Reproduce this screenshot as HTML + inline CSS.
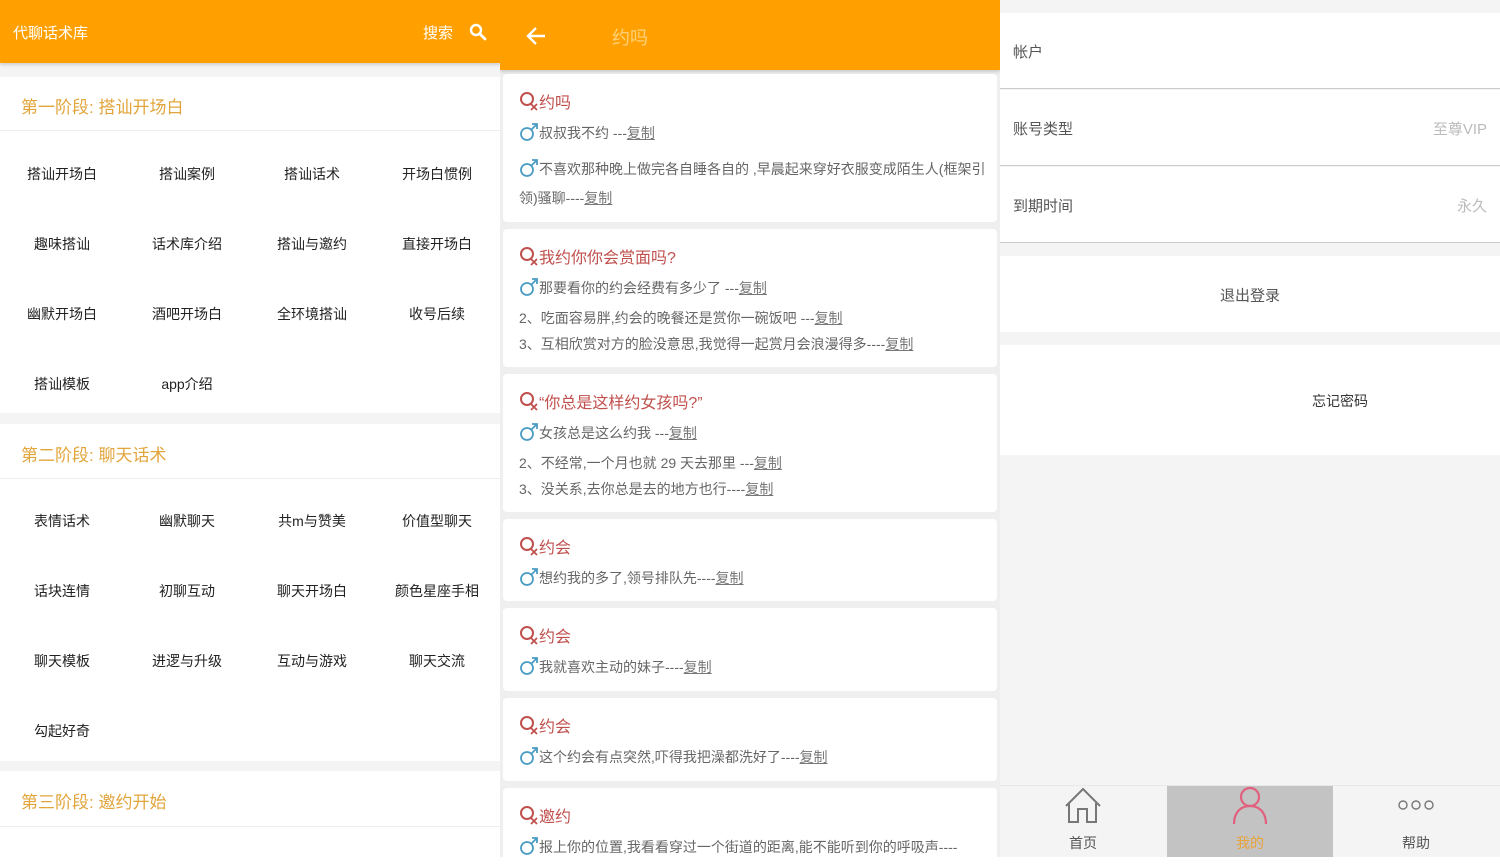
<!DOCTYPE html>
<html><head><meta charset="utf-8"><style>
*{margin:0;padding:0;box-sizing:border-box}
body{width:1500px;height:857px;overflow:hidden;position:relative;font-family:"Liberation Sans","Noto Sans CJK SC",sans-serif;background:#fff}
.p{position:absolute;top:0;height:857px;overflow:hidden}
.abs{position:absolute}
.t{position:absolute;transform:translate(-50%,-50%);white-space:nowrap}
.card{position:absolute;left:503px;width:494px;background:#fff;border-radius:4px}
.ln{position:absolute;left:16px;font-size:14px;color:#666;white-space:nowrap}
.ln u{color:#777;text-decoration:underline}
.ttl{position:absolute;left:16px;font-size:16px;color:#c0504d;white-space:nowrap}
.m{display:inline-block;width:20px;height:18px;vertical-align:-3px}
.q{display:inline-block;width:20px;height:20px;vertical-align:-3px}
</style></head><body>
<svg width="0" height="0" style="position:absolute"><defs>
<symbol id="male" viewBox="0 0 20 18"><circle cx="8" cy="11" r="6" stroke="#4a9cc4" stroke-width="1.8" fill="none"/><path d="M12.5 6.5 L18 1 M13 1 H18 V6" stroke="#4a9cc4" stroke-width="1.8" fill="none"/></symbol>
<symbol id="fq" viewBox="0 0 20 20"><circle cx="8" cy="8" r="6" stroke="#c0504d" stroke-width="2" fill="none"/><path d="M12 13 L18 19 M18 13 L12 19" stroke="#c0504d" stroke-width="1.8" fill="none"/></symbol>
</defs></svg>
<!-- Left -->
<div class="p" style="left:0;width:500px;background:#f4f4f4">
 <div class="abs" style="left:0;top:0;width:500px;height:63px;background:#ffa000;box-shadow:0 2px 3px rgba(0,0,0,.15)"></div>
 <div class="abs" style="left:13px;top:22px;color:#fff;font-size:15px">代聊话术库</div>
 <div class="abs" style="left:423px;top:22px;color:#fff;font-size:15px">搜索</div>
 <svg class="abs" style="left:469px;top:23px" width="18" height="18"><circle cx="7" cy="7" r="5" stroke="#fff" stroke-width="2.4" fill="none"/><path d="M11 11 L16 16" stroke="#fff" stroke-width="2.8" stroke-linecap="round"/></svg>
 <div class="abs" style="left:0;top:77px;width:500px;height:336px;background:#fff"></div>
 <div class="abs" style="left:0;top:130px;width:500px;height:1px;background:#eee"></div>
 <div class="abs" style="left:0;top:424px;width:500px;height:337px;background:#fff"></div>
 <div class="abs" style="left:0;top:478px;width:500px;height:1px;background:#eee"></div>
 <div class="abs" style="left:0;top:771px;width:500px;height:90px;background:#fff"></div>
 <div class="abs" style="left:0;top:826px;width:500px;height:1px;background:#eee"></div>
 <div class="abs" style="left:21px;top:93px;color:#e2a53c;font-size:17px">第一阶段: 搭讪开场白</div>
 <div class="abs" style="left:21px;top:441px;color:#e2a53c;font-size:17px">第二阶段: 聊天话术</div>
 <div class="abs" style="left:21px;top:788px;color:#e2a53c;font-size:17px">第三阶段: 邀约开始</div>
 <div style="font-size:14px;color:#222">
 <div class="t" style="left:62px;top:174px">搭讪开场白</div><div class="t" style="left:187px;top:174px">搭讪案例</div><div class="t" style="left:312px;top:174px">搭讪话术</div><div class="t" style="left:437px;top:174px">开场白惯例</div>
 <div class="t" style="left:62px;top:244px">趣味搭讪</div><div class="t" style="left:187px;top:244px">话术库介绍</div><div class="t" style="left:312px;top:244px">搭讪与邀约</div><div class="t" style="left:437px;top:244px">直接开场白</div>
 <div class="t" style="left:62px;top:314px">幽默开场白</div><div class="t" style="left:187px;top:314px">酒吧开场白</div><div class="t" style="left:312px;top:314px">全环境搭讪</div><div class="t" style="left:437px;top:314px">收号后续</div>
 <div class="t" style="left:62px;top:384px">搭讪模板</div><div class="t" style="left:187px;top:384px">app介绍</div>
 <div class="t" style="left:62px;top:521px">表情话术</div><div class="t" style="left:187px;top:521px">幽默聊天</div><div class="t" style="left:312px;top:521px">共m与赞美</div><div class="t" style="left:437px;top:521px">价值型聊天</div>
 <div class="t" style="left:62px;top:591px">话块连情</div><div class="t" style="left:187px;top:591px">初聊互动</div><div class="t" style="left:312px;top:591px">聊天开场白</div><div class="t" style="left:437px;top:591px">颜色星座手相</div>
 <div class="t" style="left:62px;top:661px">聊天模板</div><div class="t" style="left:187px;top:661px">进逻与升级</div><div class="t" style="left:312px;top:661px">互动与游戏</div><div class="t" style="left:437px;top:661px">聊天交流</div>
 <div class="t" style="left:62px;top:731px">勾起好奇</div>
 </div>
</div>
<!-- Middle -->
<div class="p" style="left:500px;width:500px;background:#efefef">
 <div class="abs" style="left:0;top:0;width:500px;height:70px;background:#ffa000;box-shadow:0 2px 3px rgba(0,0,0,.15)"></div>
 <svg class="abs" style="left:25px;top:25px" width="22" height="22"><path d="M20 11 H3 M11 3 L3 11 L11 19" stroke="#fff" stroke-width="2.4" fill="none"/></svg>
 <div class="abs" style="left:112px;top:24px;color:#ffd27a;font-size:18px">约吗</div>
</div>
<div class="card" style="top:74px;height:148px">
 <div class="ttl" style="top:15px"><svg class="q"><use href="#fq"/></svg>约吗</div>
 <div class="ln" style="top:49px"><svg class="m"><use href="#male"/></svg>叔叔我不约 ---<u>复制</u></div>
 <div class="ln" style="top:81px;line-height:29px;width:472px;white-space:normal"><svg class="m"><use href="#male"/></svg>不喜欢那种晚上做完各自睡各自的 ,早晨起来穿好衣服变成陌生人(框架引领)骚聊----<u>复制</u></div>
</div>
<div class="card" style="top:229px;height:138px">
 <div class="ttl" style="top:15px"><svg class="q"><use href="#fq"/></svg>我约你你会赏面吗?</div>
 <div class="ln" style="top:49px"><svg class="m"><use href="#male"/></svg>那要看你的约会经费有多少了 ---<u>复制</u></div>
 <div class="ln" style="top:79px">2、吃面容易胖,约会的晚餐还是赏你一碗饭吧 ---<u>复制</u></div>
 <div class="ln" style="top:105px">3、互相欣赏对方的脸没意思,我觉得一起赏月会浪漫得多----<u>复制</u></div>
</div>
<div class="card" style="top:374px;height:138px">
 <div class="ttl" style="top:15px"><svg class="q"><use href="#fq"/></svg>“你总是这样约女孩吗?”</div>
 <div class="ln" style="top:49px"><svg class="m"><use href="#male"/></svg>女孩总是这么约我 ---<u>复制</u></div>
 <div class="ln" style="top:79px">2、不经常,一个月也就 29 天去那里 ---<u>复制</u></div>
 <div class="ln" style="top:105px">3、没关系,去你总是去的地方也行----<u>复制</u></div>
</div>
<div class="card" style="top:519px;height:82px">
 <div class="ttl" style="top:15px"><svg class="q"><use href="#fq"/></svg>约会</div>
 <div class="ln" style="top:49px"><svg class="m"><use href="#male"/></svg>想约我的多了,领号排队先----<u>复制</u></div>
</div>
<div class="card" style="top:608px;height:83px">
 <div class="ttl" style="top:15px"><svg class="q"><use href="#fq"/></svg>约会</div>
 <div class="ln" style="top:49px"><svg class="m"><use href="#male"/></svg>我就喜欢主动的妹子----<u>复制</u></div>
</div>
<div class="card" style="top:698px;height:83px">
 <div class="ttl" style="top:15px"><svg class="q"><use href="#fq"/></svg>约会</div>
 <div class="ln" style="top:49px"><svg class="m"><use href="#male"/></svg>这个约会有点突然,吓得我把澡都洗好了----<u>复制</u></div>
</div>
<div class="card" style="top:788px;height:80px">
 <div class="ttl" style="top:15px"><svg class="q"><use href="#fq"/></svg>邀约</div>
 <div class="ln" style="top:49px"><svg class="m"><use href="#male"/></svg>报上你的位置,我看看穿过一个街道的距离,能不能听到你的呼吸声----</div>
</div>
<!-- Right -->
<div class="p" style="left:1000px;width:500px;background:#f4f4f4">
 <div class="abs" style="left:0;top:13px;width:500px;height:76px;background:#fff;border-bottom:1px solid #ccc"></div>
 <div class="abs" style="left:0;top:90px;width:500px;height:76px;background:#fff;border-bottom:1px solid #ccc"></div>
 <div class="abs" style="left:0;top:167px;width:500px;height:76px;background:#fff;border-bottom:1px solid #ccc"></div>
 <div class="abs" style="left:13px;top:41px;font-size:15px;color:#555">帐户</div>
 <div class="abs" style="left:13px;top:118px;font-size:15px;color:#555">账号类型</div>
 <div class="abs" style="right:13px;top:118px;font-size:15px;color:#bbb">至尊VIP</div>
 <div class="abs" style="left:13px;top:195px;font-size:15px;color:#555">到期时间</div>
 <div class="abs" style="right:13px;top:195px;font-size:15px;color:#bbb">永久</div>
 <div class="abs" style="left:0;top:256px;width:500px;height:76px;background:#fff"></div>
 <div class="t" style="left:250px;top:295px;font-size:15px;color:#555">退出登录</div>
 <div class="abs" style="left:0;top:345px;width:500px;height:110px;background:#fff"></div>
 <div class="t" style="left:340px;top:401px;font-size:14px;color:#333">忘记密码</div>
 <div class="abs" style="left:0;top:785px;width:500px;height:1px;background:#e8e8e8"></div>
 <div class="abs" style="left:167px;top:786px;width:166px;height:71px;background:#c3c3c3"></div>
 <svg class="abs" style="left:64px;top:787px" width="38" height="38"><path d="M2 19 L19 2 L36 19 M5 16 V35 H14 V22 H23 V35 H32 V16" stroke="#777" stroke-width="2" fill="none"/></svg>
 <div class="t" style="left:83px;top:843px;font-size:14px;color:#555">首页</div>
 <svg class="abs" style="left:231px;top:786px" width="38" height="40"><circle cx="19" cy="11" r="9" stroke="#e0607e" stroke-width="2.2" fill="none"/><path d="M3 38 C3 26 10 20 19 20 C28 20 35 26 35 38" stroke="#e0607e" stroke-width="2.2" fill="none"/></svg>
 <div class="t" style="left:250px;top:843px;font-size:14px;color:#e8a33a">我的</div>
 <svg class="abs" style="left:398px;top:798px" width="36" height="14"><circle cx="5" cy="7" r="4" stroke="#777" stroke-width="1.4" fill="none"/><circle cx="18" cy="7" r="4" stroke="#777" stroke-width="1.4" fill="none"/><circle cx="31" cy="7" r="4" stroke="#777" stroke-width="1.4" fill="none"/></svg>
 <div class="t" style="left:416px;top:843px;font-size:14px;color:#555">帮助</div>
</div>
</body></html>
